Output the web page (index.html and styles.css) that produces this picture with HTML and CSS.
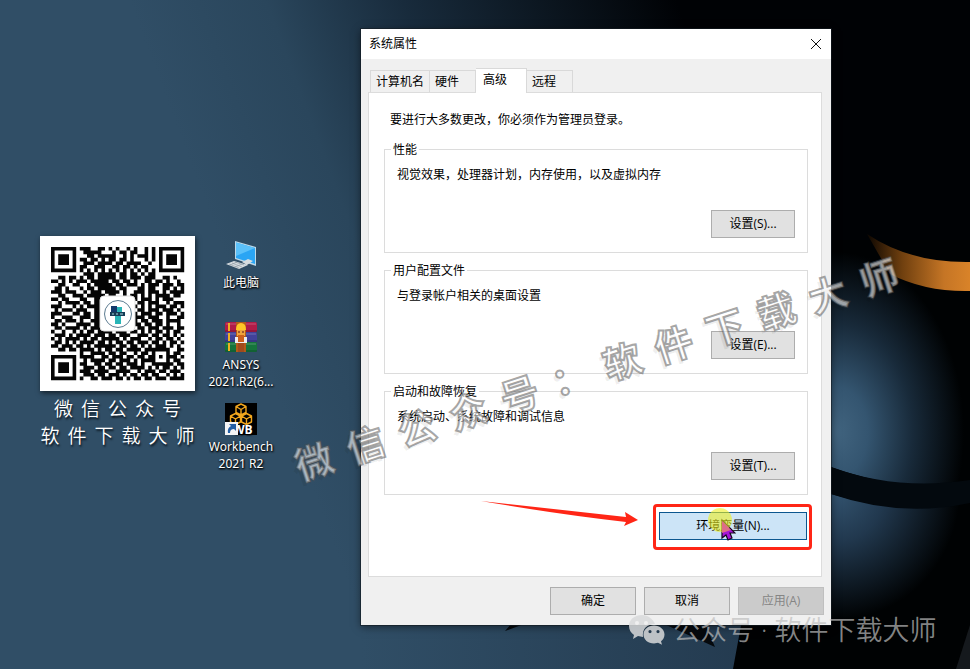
FILE: index.html
```html
<!DOCTYPE html>
<html lang="zh-CN">
<head>
<meta charset="utf-8">
<title>系统属性</title>
<link rel="stylesheet" href="styles.css">
</head>
<body>
<main class="desktop">
  <svg class="wallpaper" viewBox="0 0 970 669" preserveAspectRatio="xMinYMin slice" aria-hidden="true">
    <defs>
      <linearGradient id="sky" gradientUnits="userSpaceOnUse" x1="200" y1="190" x2="680" y2="10">
        <stop offset="0" stop-color="#304e66"/><stop offset=".25" stop-color="#2a465c"/><stop offset=".5" stop-color="#182b3c"/><stop offset="1" stop-color="#000205"/>
      </linearGradient>
      <linearGradient id="floor" x1="0" x2="1" y1="0" y2="0">
        <stop offset="0" stop-color="#304e66"/><stop offset="1" stop-color="#243b50"/>
      </linearGradient>
      <radialGradient id="glow" gradientUnits="userSpaceOnUse" cx="0" cy="0" r="1" gradientTransform="translate(836 432) scale(128 180)">
        <stop offset="0" stop-color="#41647f"/><stop offset=".25" stop-color="#345570"/><stop offset=".6" stop-color="#182a3a"/><stop offset="1" stop-color="#000203"/>
      </radialGradient>
      <radialGradient id="glow2" gradientUnits="userSpaceOnUse" cx="0" cy="0" r="1" gradientTransform="translate(835 490) scale(125 130)">
        <stop offset="0" stop-color="#345571"/><stop offset=".4" stop-color="#21384e"/><stop offset="1" stop-color="#000203"/>
      </radialGradient>
      <linearGradient id="amber" gradientUnits="userSpaceOnUse" x1="866" y1="0" x2="970" y2="0">
        <stop offset="0" stop-color="#0a0501"/><stop offset=".35" stop-color="#70400f"/><stop offset=".75" stop-color="#c57525"/><stop offset="1" stop-color="#d98329"/>
      </linearGradient>
    </defs>
    <rect width="970" height="669" fill="url(#sky)"/>
    <path d="M361 600H745V669H361Z" fill="url(#floor)"/>
    <path d="M505 631L511 624H524ZM664 624H705L715 647Z" fill="#05090d"/>
    <path d="M742 620L733 669H970V240H831V620Z" fill="#000203"/>
    <path d="M831 250H970V490Q895 490 831 467Z" fill="url(#glow)"/>
    <path d="M831 494Q900 515 970 503V640H831Z" fill="url(#glow2)"/>
    <path d="M831 467Q895 491 970 480V503Q900 518 831 494Z" fill="#03090e"/>
    <path d="M867 234Q910 263 970 262V291Q925 292 890 274Z" fill="url(#amber)"/>
    <path d="M956 669L970 625V669Z" fill="#15191d"/>
  </svg>

  <section class="promo">
    <svg class="qr" viewBox="0 0 155 155" role="img" aria-label="二维码">
      <rect width="155" height="155" fill="#fff"/>
      <g id="modules" transform="translate(11 11) scale(3.6)" fill="#050505"></g>
      <rect x="60" y="60" width="35" height="35" rx="4" fill="#fff" stroke="#ddd"/>
      <circle cx="78" cy="78" r="13.5" fill="#fff" stroke="#5d7c91"/>
      <path d="M71 70h6v7h-6z" fill="#13396b"/><path d="M77 71h5v5h-5zM75 80h6v8h-6zM81 76h4v4h-4z" fill="#27b5b7"/><path d="M70 76h15v4H70z" fill="#153c55"/><path d="M72 78h2m2 0h2m2 0h3" stroke="#a9dce2"/>
    </svg>
    <p class="tracked"><span>微</span><span>信</span><span>公</span><span>众</span><span>号</span></p>
    <p class="tracked"><span>软</span><span>件</span><span>下</span><span>载</span><span>大</span><span>师</span></p>
  </section>

  <nav class="shortcuts">
    <a href="#" class="shortcut">
      <svg viewBox="0 0 32 32" aria-hidden="true"><path d="M10 2L31 8V27L10 20Z" fill="#bcd8e8"/><path d="M11 3.500L30 9V25L11 19Z" fill="#2aa5f4"/><path d="M11 3.500L30 9L11 17Z" fill="#5bc1fa"/><path d="M17 23l6-3 5 2-6 4zM1 25L9 22 23 26 14 30Z" fill="#d6dce0"/><path d="M4 25l10 4M7 24l10 4M10 23l9 3M5 26l7-3M10 28l7-3" stroke="#89969f" stroke-width=".6"/></svg>
      <span>此电脑</span>
    </a>
    <a href="#" class="shortcut">
      <svg viewBox="0 0 32 32" aria-hidden="true"><rect y="1" width="32" height="10" rx="1.500" fill="#b01c48"/><rect y="11" width="32" height="10" rx="1.500" fill="#41419a"/><rect y="21" width="32" height="10" rx="1.500" fill="#16743c"/><path d="M0 10h32M0 20h32M0 30h32" stroke="#000" stroke-opacity=".3"/><path d="M1 3h30M1 13h30M1 23h30" stroke="#fff" stroke-opacity=".25"/><path d="M4 2v8M4 12v8M4 22v8" stroke="#f0b021" stroke-width="2"/><path d="M11 1h10v30H11z" fill="#b35a19"/><path d="M11 9q0-7 5-7t5 7z" fill="#ffc526"/><path d="M12 9h8v6h-8z" fill="#f0a33b"/><path d="M10 16h12v6H10z" fill="#eee"/><path d="M13 14h6v7h-6z" fill="#cf601c"/><path d="M13 11h2m2 0h2" stroke="#512"/><path d="M13 22h6v9h-6z" fill="#a04a1c"/></svg>
      <span>ANSYS<br>2021.R2(6...</span>
    </a>
    <a href="#" class="shortcut">
      <svg class="workbench" viewBox="0 0 32 32" aria-hidden="true"><path d="M0 0h32v32H0z" fill="#000"/><path fill="none" stroke="#f2a71d" stroke-width="1.4" stroke-linejoin="round" d="M16 1l5 2.500v6L16 12l-5-2.500v-6zM11 3.500l5 3 5-3M16 6.500V12M10.500 10.500l5 2.500v6l-5 2.500-5-2.500v-6zM5.500 13l5 3 5-3M10.500 16v5.500M21.500 10.500l5 2.500v6l-5 2.500-5-2.500v-6zM16.500 13l5 3 5-3M21.500 16v5.500"/><text x="8" y="31" class="icon-letters">WB</text><path d="M0 19h13v13H0z" fill="#f4f4f4"/><path d="M3 30q-1-5 3-7L4 21h7v7L9 26q-4 0-4 4z" fill="#245fa5"/></svg>
      <span>Workbench<br>2021 R2</span>
    </a>
  </nav>

  <section class="dialog" role="dialog" aria-labelledby="dialog-title">
    <header class="titlebar">
      <h1 id="dialog-title">系统属性</h1>
      <button class="close" aria-label="关闭"><svg viewBox="0 0 12 12" aria-hidden="true"><path d="M1 1l10 10M11 1L1 11" stroke="#111"/></svg></button>
    </header>
    <div class="tabs" role="tablist">
      <button class="tab tab-wide" role="tab">计算机名</button><button class="tab" role="tab">硬件</button><button class="tab selected" role="tab" aria-selected="true">高级</button><button class="tab" role="tab">远程</button>
    </div>
    <div class="panel" role="tabpanel">
      <p class="note">要进行大多数更改，你必须作为管理员登录。</p>
      <fieldset class="group"><legend>性能</legend><p>视觉效果，处理器计划，内存使用，以及虚拟内存</p><button class="btn">设置(S)...</button></fieldset>
      <fieldset class="group"><legend>用户配置文件</legend><p>与登录帐户相关的桌面设置</p><button class="btn">设置(E)...</button></fieldset>
      <fieldset class="group"><legend>启动和故障恢复</legend><p>系统启动、系统故障和调试信息</p><button class="btn">设置(T)...</button></fieldset>
      <div class="variables"><button class="btn btn-env">环境变量(N)...</button></div>
    </div>
    <footer class="actions">
      <button class="btn">确定</button><button class="btn">取消</button><button class="btn" disabled>应用(A)</button>
    </footer>
  </section>

  <p class="watermark"><span>微</span><span>信</span><span>公</span><span>众</span><span>号</span><span>：</span><span>软</span><span>件</span><span>下</span><span>载</span><span>大</span><span>师</span></p>

  <svg class="arrow" viewBox="0 0 160 32" aria-hidden="true"><path d="M0 1L145 17 144 12 157 20 143 26 145 22Q75 14 0 1Z" fill="#ff2616"/></svg>
  <svg class="pointer" viewBox="0 0 28 34" aria-hidden="true"><path d="M14 13V31L18 28 20 33 24 31 22 26H27Z" fill="#a514d8" stroke="#16051c" stroke-width="1.2"/><circle cx="12" cy="13" r="12" fill="#eef01f" fill-opacity=".6"/><path d="M14 14V26L23 23Z" fill="#dd6d87"/></svg>

  <div class="account">
    <svg viewBox="0 0 36 30" aria-hidden="true"><path fill-rule="evenodd" fill="#d8d9da" fill-opacity=".85" d="M13 0C5 0 0 5 0 11c0 4 2 7 5 9l-1 4 5-3 5 1C13 14 18 9 26 9 24 4 19 0 13 0ZM8 6a2 2 0 1 1 0 4 2 2 0 0 1 0-4ZM17 6a2 2 0 1 1 0 4 2 2 0 0 1 0-4Z"/><path fill-rule="evenodd" fill="#d8d9da" fill-opacity=".85" d="M25 10.500c-6 0-10.500 4-10.500 9s4.500 9 10.500 9l4-.7 4 2-1-3.500c2-1.500 3.500-4 3.500-6.800 0-5-4.500-9-10.500-9ZM21 15a1.600 1.600 0 1 1 0 3.200 1.600 1.600 0 0 1 0-3.200ZM29 15a1.600 1.600 0 1 1 0 3.200 1.600 1.600 0 0 1 0-3.200Z"/></svg>
    <span>公众号 · 软件下载大师</span>
  </div>
</main>
<script src="qr.js"></script>
</body>
</html>
```
FILE: qr.js
```js
const rows = [
  "1111111011100110101001010010101111111",
  "1000001001111100010110110010101000001",
  "1011101000110111110010101110101011101",
  "1011101011011010110110100010101011101",
  "1011101001110111101101111001001011101",
  "1000001011001110011011010110001000001",
  "1111111010101010101010101010101111111",
  "0000000001110111110110110101100000000",
  "0011011010110111110110111011100110100",
  "1101010111011111011011010011011010010",
  "0011001100101111101101110101110111011",
  "0110100010110111110110001101100110101",
  "1110111001011101111010011101110101111",
  "0011001110111110110010110101011110110",
  "1101100011001111000000010111010111000",
  "0010111101101110000000001101110010111",
  "1110001010111100000000010101011101101",
  "0101110111001100000000001101110111010",
  "1110001101101100000000010111011011101",
  "1001110011101110000000011101110010011",
  "0110111010011100000000010110111011110",
  "1101000111101100000000011011011010010",
  "0110111101011110000000001101110111011",
  "1001001010110111101110110101011010110",
  "0111010111101110110111001110110110101",
  "1010111101011011111010111001011011010",
  "0110101011110110101101101110110101101",
  "1101110110101111110110110101011101010",
  "0011011011110101101101111011111110011",
  "0000000010011110110110010110100010110",
  "1111111011110011011101101101101011101",
  "1000001001011110110111010111100010110",
  "1011101011001101101101110100111111011",
  "1011101001110110110110111101010110101",
  "1011101011101111001111001011101101110",
  "1000001001110110111010110110110010101",
  "1111111010011011101101011011011101111"
];
const path = document.createElementNS("http://www.w3.org/2000/svg", "path");
let d = "";
rows.forEach((row, y) => {
  for (const run of row.matchAll(/1+/g)) {
    d += `M${run.index} ${y}h${run[0].length}v1h-${run[0].length}z`;
  }
});
path.setAttribute("d", d);
document.getElementById("modules").append(path);
```
FILE: styles.css
```css
* { box-sizing: border-box; }
body {
  margin: 0;
  font: 12px/16px "Open Sans", "Noto Sans CJK SC", sans-serif;
  color: #000;
}
p, h1 { margin: 0; }
button { font: inherit; color: inherit; }
.desktop { position: relative; min-height: 100vh; overflow: hidden; background: #304e66; }
.wallpaper { position: absolute; inset: 0; width: 100%; height: 100%; }

.promo { position: absolute; left: 40px; top: 236px; width: 155px; }
.qr { display: block; width: 100%; margin-bottom: 3px; box-shadow: 1px 2px 5px rgba(0, 0, 0, .6); }
.tracked {
  display: flex;
  justify-content: center;
  gap: 8px;
  font: 350 19px/27px "Noto Sans CJK SC", sans-serif;
  color: #fff;
  text-shadow: 1px 2px 2px #0b151e;
}

.shortcuts { position: absolute; left: 201px; top: 239px; width: 80px; display: grid; grid-auto-rows: 82px; }
.shortcut {
  display: flex;
  flex-direction: column;
  align-items: center;
  gap: 3px;
  color: #fff;
  font: 12px/17px "Noto Sans", "Noto Sans CJK SC", sans-serif;
  text-align: center;
  text-decoration: none;
  text-shadow: 1px 1px 2px #000, 0 1px 2px #000;
}
.shortcut svg { width: 32px; height: 32px; flex: none; }
.shortcut .workbench { overflow: visible; }
.icon-letters { font: bold 12px "Open Sans", sans-serif; fill: #fff; }

.dialog {
  position: absolute;
  left: 361px;
  top: 29px;
  width: 470px;
  background: #f0f0f0;
  box-shadow: 0 0 0 1px rgba(20, 28, 35, .6), 0 2px 8px rgba(0, 0, 0, .5);
}
.titlebar { display: flex; justify-content: space-between; align-items: center; height: 30px; padding: 0 9px 0 8px; background: #fff; }
.titlebar h1 { font-size: 12px; font-weight: 400; }
.close { display: flex; padding: 0; border: 0; background: none; }
.close svg { width: 12px; height: 12px; }
.tabs { display: flex; align-items: flex-end; height: 33px; padding-left: 9px; }
.tab {
  width: 46px;
  height: 22px;
  padding: 0 0 0 5px;
  border: 1px solid #d9d9d9;
  border-width: 1px 1px 0 0;
  background: #f0f0f0;
  text-align: left;
}
.tab-wide { width: 60px; border-left-width: 1px; }
.tab.selected { z-index: 1; width: 51px; height: 25px; margin-bottom: -1px; padding: 0 0 3px 7px; background: #fff; }
.panel { margin: 0 9px 0 7px; padding: 19px 13px 26px 15px; border: 1px solid #dcdcdc; background: #fff; }
.note { padding-left: 6px; margin-bottom: 12px; }
.group {
  display: flex;
  flex-direction: column;
  align-items: flex-start;
  gap: 27px;
  min-width: 0;
  margin: 0 0 8px;
  padding: 9px 12px 14px;
  border: 1px solid #dcdcdc;
}
.group legend { margin-left: -6px; padding: 2px 2px 0; }
.btn { width: 84px; height: 28px; padding: 0; border: 1px solid #adadad; background: #e1e1e1; }
.group .btn { align-self: flex-end; }
.variables {
  width: 159px;
  margin: 9px -4px 0 auto;
  padding: 5px 2px 7px 3px;
  border: 3px solid #ff2616;
  border-radius: 4px;
}
.btn-env { display: block; width: 100%; border-color: #0b568f; background: #cce4f7; }
.actions { display: flex; justify-content: flex-end; gap: 8px; padding: 10px 7px; }
.actions .btn { width: 86px; }
.btn:disabled { border-color: #bfbfbf; background: #cbcbcb; color: #858585; }

.watermark {
  position: absolute;
  left: 280px;
  top: 338px;
  display: flex;
  gap: 16px;
  font: 700 38px/60px "Noto Sans CJK SC", sans-serif;
  color: rgba(255, 255, 255, .62);
  -webkit-text-stroke: 2px rgba(80, 80, 80, .5);
  text-shadow: -4px 3px 0 rgba(0, 0, 0, .06);
  transform: rotate(-18deg);
  pointer-events: none;
}
.arrow { position: absolute; left: 481px; top: 500px; width: 160px; height: 32px; }
.pointer { position: absolute; left: 708px; top: 507px; width: 28px; height: 34px; }
.account {
  position: absolute;
  left: 629px;
  top: 615px;
  display: flex;
  align-items: center;
  gap: 8px;
  font: 350 27px/30px "Open Sans", "Noto Sans CJK SC", sans-serif;
  color: rgba(190, 190, 190, .7);
  white-space: nowrap;
}
.account svg { width: 36px; height: 30px; }
```
